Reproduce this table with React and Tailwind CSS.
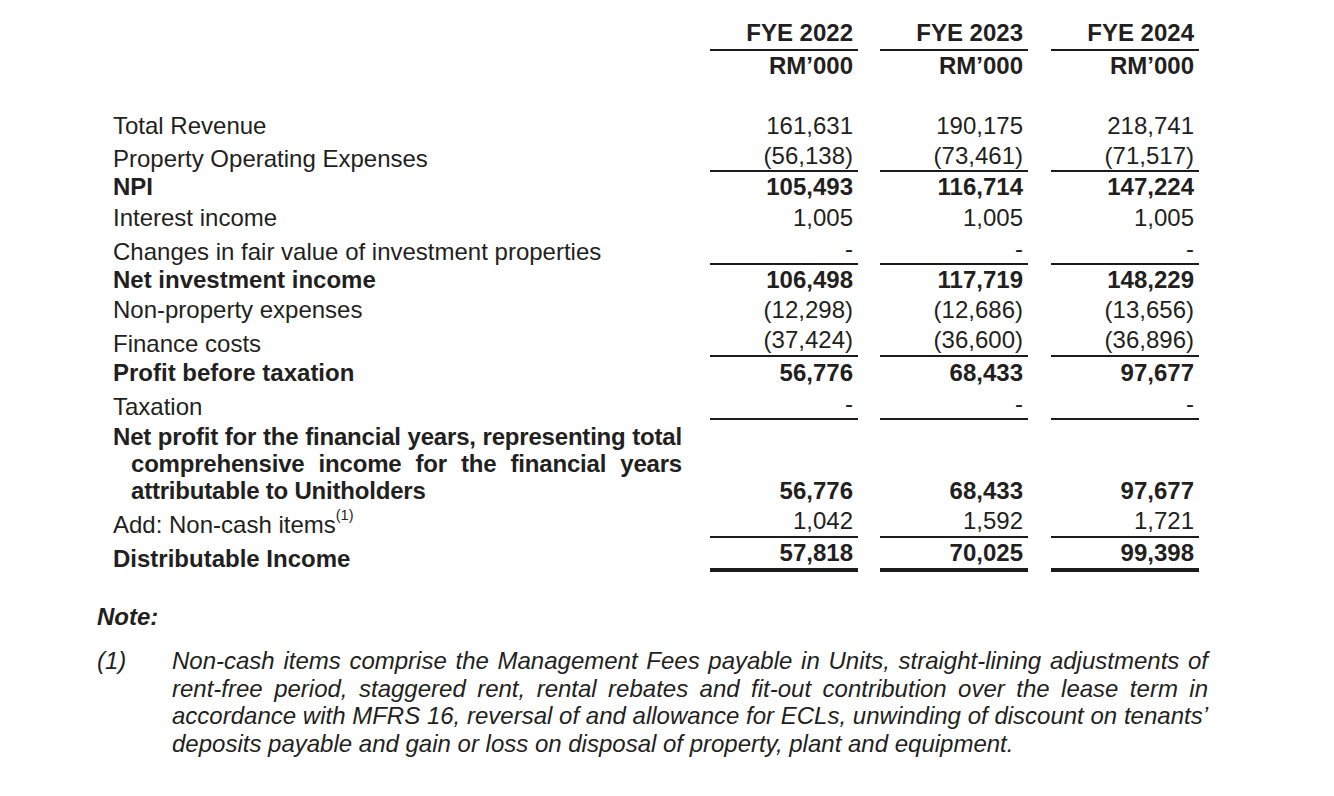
import React from 'react';

// figures are RM'000 for FYE 2022 / 2023 / 2024
const rows = [
  { label: 'Total Revenue', values: ['161,631', '190,175', '218,741'], h: 'h-[30px]' },
  { label: 'Property Operating Expenses', values: ['(56,138)', '(73,461)', '(71,517)'], h: 'h-[31px]', line: 'thin', lp: 'pt-[5px]' },
  { label: 'NPI', bold: true, values: ['105,493', '116,714', '147,224'], h: 'h-[30px]' },
  { label: 'Interest income', values: ['1,005', '1,005', '1,005'], h: 'h-[32px]' },
  { label: 'Changes in fair value of investment properties', values: ['-', '-', '-'], h: 'h-[31px]', line: 'thin', lp: 'pt-[5px]' },
  { label: 'Net investment income', bold: true, values: ['106,498', '117,719', '148,229'], h: 'h-[30px]' },
  { label: 'Non-property expenses', values: ['(12,298)', '(12,686)', '(13,656)'], h: 'h-[30px]' },
  { label: 'Finance costs', values: ['(37,424)', '(36,600)', '(36,896)'], h: 'h-[32px]', line: 'thin', lp: 'pt-[5px]' },
  { label: 'Profit before taxation', bold: true, values: ['56,776', '68,433', '97,677'], h: 'h-[32px]' },
  { label: 'Taxation', values: ['-', '-', '-'], h: 'h-[31px]', line: 'thin', lp: 'pt-[4px]' },
  { label: 'netprofit', bold: true, values: ['56,776', '68,433', '97,677'], h: 'h-[86px]' },
  {
    label: (
      <>
        Add: Non-cash items<sup className="text-[14.5px] relative -top-[10px]">(1)</sup>
      </>
    ),
    values: ['1,042', '1,592', '1,721'],
    h: 'h-[32px]',
    line: 'thin',
    lp: 'pt-[5px]',
  },
  { label: 'Distributable Income', bold: true, values: ['57,818', '70,025', '99,398'], h: 'h-[34px]', line: 'thick', lp: 'pt-[7px]' },
];

const colMargins = ['', 'ml-[22px]', 'ml-[23px]'];

const ValueCell = ({ children, bold, line, idx }) => {
  const border = line === 'thick' ? 'border-b-4' : line === 'thin' ? 'border-b-2' : '';
  return (
    <div
      className={`w-[148px] shrink-0 h-full flex items-center justify-end pr-[5px] border-[#1c1c1c] ${border} ${colMargins[idx]} ${bold ? 'font-bold' : ''}`}
    >
      {children}
    </div>
  );
};

const Row = ({ row }) => {
  if (row.label === 'netprofit') {
    return (
      <div className={`flex ${row.h}`}>
        <div className="w-[597px] shrink-0 pt-[3px]">
          <p className="w-[569px] font-bold leading-[27px] text-justify tracking-[-0.2px] pl-[18px] -indent-[18px]">
            Net profit for the financial years, representing total comprehensive income for the financial years attributable to Unitholders
          </p>
        </div>
        {row.values.map((v, i) => (
          <div key={i} className={`w-[148px] shrink-0 h-full flex items-end ${colMargins[i]}`}>
            <div className="w-full h-[30px] flex items-center justify-end pr-[5px] font-bold">{v}</div>
          </div>
        ))}
      </div>
    );
  }
  return (
    <div className={`flex ${row.h}`}>
      <div className={`w-[597px] shrink-0 flex items-center whitespace-nowrap ${row.lp || ''} ${row.bold ? 'font-bold' : ''}`}>
        {row.label}
      </div>
      {row.values.map((v, i) => (
        <ValueCell key={i} idx={i} bold={row.bold} line={row.line}>
          {v}
        </ValueCell>
      ))}
    </div>
  );
};

export default function App() {
  return (
    <div className="w-[1334px] h-[796px] bg-white text-[#231f20] text-[24px] font-['Liberation_Sans',Arial,sans-serif] overflow-hidden">
      <div className="pl-[113px] pt-[16px]">
        {/* column headings */}
        <div className="flex h-[35px]">
          <div className="w-[597px] shrink-0" />
          {['FYE 2022', 'FYE 2023', 'FYE 2024'].map((t, i) => (
            <ValueCell key={t} idx={i} bold line="thin">
              {t}
            </ValueCell>
          ))}
        </div>
        <div className="flex h-[30px]">
          <div className="w-[597px] shrink-0" />
          {[0, 1, 2].map((i) => (
            <ValueCell key={i} idx={i} bold>
              RM’000
            </ValueCell>
          ))}
        </div>
        <div className="h-[30px]" />

        {rows.map((row, i) => (
          <Row key={i} row={row} />
        ))}
      </div>

      {/* note */}
      <div className="pl-[97px] mt-[31px]">
        <p className="font-bold italic leading-[28px]">Note:</p>
        <div className="flex mt-[16px]">
          <span className="w-[75px] shrink-0 italic leading-[27.7px]">(1)</span>
          <p className="w-[1036px] italic leading-[27.7px] text-justify">
            Non-cash items comprise the Management Fees payable in Units, straight-lining adjustments of rent-free period, staggered rent, rental rebates and fit-out contribution over the lease term in accordance with MFRS 16, reversal of and allowance for ECLs, unwinding of discount on tenants’ deposits payable and gain or loss on disposal of property, plant and equipment.
          </p>
        </div>
      </div>
    </div>
  );
}
